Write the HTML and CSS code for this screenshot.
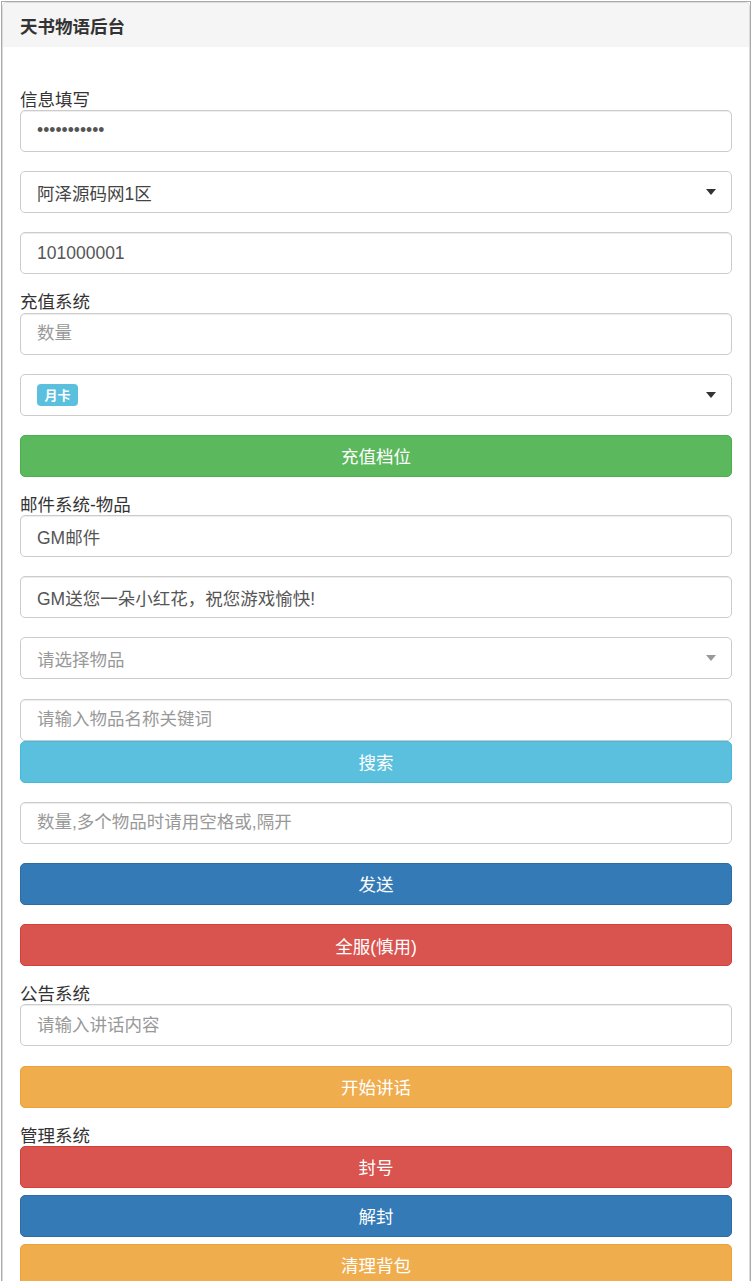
FILE: index.html
```html
<!DOCTYPE html>
<html lang="zh-CN">
<head>
<meta charset="utf-8">
<title>天书物语后台</title>
<link rel="stylesheet" href="styles.css">
</head>
<body>
<div class="frame">
  <div class="panel">
    <div class="panel-heading">天书物语后台</div>
    <div class="panel-body">
      <div class="group-label">信息填写</div>
      <input class="field" type="password" value="12345678901">
      <div class="field select"><span class="select-text">阿泽源码网1区</span><span class="caret"></span></div>
      <input class="field" type="text" value="101000001">

      <div class="group-label">充值系统</div>
      <input class="field" type="text" placeholder="数量">
      <div class="field select"><span class="badge">月卡</span><span class="caret"></span></div>
      <button class="btn btn-success">充值档位</button>

      <div class="group-label">邮件系统-物品</div>
      <input class="field" type="text" value="GM邮件">
      <input class="field" type="text" value="GM送您一朵小红花，祝您游戏愉快!">
      <div class="field select"><span class="select-placeholder">请选择物品</span><span class="caret caret-muted"></span></div>
      <input class="field field-attached" type="text" placeholder="请输入物品名称关键词">
      <button class="btn btn-info">搜索</button>
      <input class="field" type="text" placeholder="数量,多个物品时请用空格或,隔开">
      <button class="btn btn-primary">发送</button>
      <button class="btn btn-danger">全服(慎用)</button>

      <div class="group-label">公告系统</div>
      <input class="field" type="text" placeholder="请输入讲话内容">
      <button class="btn btn-warning">开始讲话</button>

      <div class="group-label">管理系统</div>
      <button class="btn btn-danger btn-tight">封号</button>
      <button class="btn btn-primary btn-tight">解封</button>
      <button class="btn btn-warning btn-tight">清理背包</button>
    </div>
  </div>
</div>
</body>
</html>
```
FILE: styles.css
```css
* { box-sizing: border-box; }

html, body {
  margin: 0;
  padding: 0;
  background: #fff;
}

body {
  font-family: "Liberation Sans", "Noto Sans CJK SC", sans-serif;
  font-size: 17.5px;
  color: #333;
}

.frame {
  margin: 1px 1px 0 1px;
  border: 1px solid #a9a9a9;
  border-bottom: none;
  min-height: 1290px;
}

.panel {
  border: 1px solid #dcdcdc;
  border-bottom: none;
  border-radius: 5px 5px 0 0;
  min-height: 1290px;
}

.panel-heading {
  height: 44px;
  background: #f5f5f5;
  border-radius: 4px 4px 0 0;
  padding: 0 17px;
  display: flex;
  align-items: center;
  font-weight: bold;
  font-size: 17.5px;
  color: #333;
}

.panel-body {
  padding: 43.8px 17px 0 17px;
  display: flex;
  flex-direction: column;
}

.group-label {
  height: 19.2px;
  line-height: 19px;
  font-size: 17.5px;
  color: #333;
  flex-shrink: 0;
}

.field {
  display: flex;
  align-items: center;
  flex-shrink: 0;
  width: 100%;
  height: 42px;
  margin: 0 0 19.15px 0;
  padding: 0 16px;
  border: 1px solid #ccc;
  border-radius: 5px;
  background: #fff;
  box-shadow: inset 0 1px 1px rgba(0, 0, 0, 0.075);
  font-family: "Liberation Sans", "Noto Sans CJK SC", sans-serif;
  font-size: 17.5px;
  color: #555;
  outline: none;
}

.field::placeholder {
  color: #999;
}

.field-attached {
  margin-bottom: 0;
}

.select {
  justify-content: space-between;
  box-shadow: none;
  border-color: #cbcbcb;
}

.select-text {
  color: #444;
}

.select-placeholder {
  color: #999;
}

.caret {
  width: 0;
  height: 0;
  border-left: 5px solid transparent;
  border-right: 5px solid transparent;
  border-top: 6px solid #333;
  margin-right: -1px;
}

.caret-muted {
  border-top-color: #999;
}

.badge {
  display: inline-flex;
  align-items: center;
  justify-content: center;
  width: 41px;
  height: 22px;
  background: #5bc0de;
  color: #fff;
  font-weight: bold;
  font-size: 13px;
  border-radius: 4px;
}

.btn {
  display: flex;
  align-items: center;
  justify-content: center;
  flex-shrink: 0;
  width: 100%;
  height: 42px;
  margin: 0 0 19.15px 0;
  padding: 0;
  border: 1px solid transparent;
  border-radius: 5px;
  color: #fff;
  font-family: "Liberation Sans", "Noto Sans CJK SC", sans-serif;
  font-size: 17.5px;
  cursor: pointer;
}

.btn-tight {
  margin-bottom: 7px;
}

.btn-success { background: #5cb85c; border-color: #4cae4c; }
.btn-info    { background: #5bc0de; border-color: #46b8da; }
.btn-primary { background: #337ab7; border-color: #2e6da4; }
.btn-danger  { background: #d9534f; border-color: #d43f3a; }
.btn-warning { background: #f0ad4e; border-color: #eea236; }
```
